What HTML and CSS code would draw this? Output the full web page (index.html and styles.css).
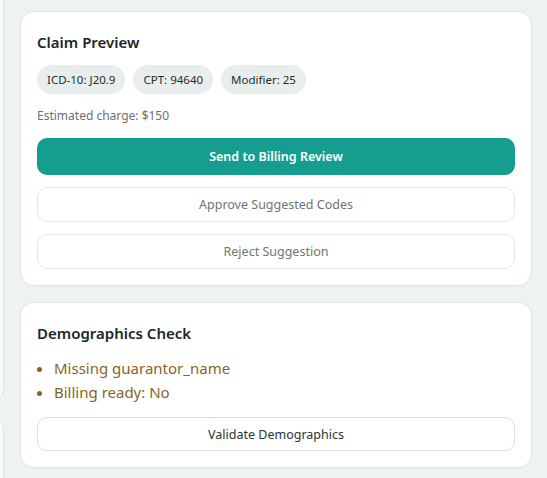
FILE: index.html
```html
<!DOCTYPE html>
<html lang="en">
<head>
<meta charset="utf-8">
<title>Claim Preview</title>
<link rel="stylesheet" href="styles.css">
</head>
<body>
<div class="layout">
  <div class="side">
    <div class="side-card side-card-top"></div>
    <div class="side-card side-card-bottom"></div>
  </div>
  <main class="main">
    <section class="card">
      <h2 class="card-title">Claim Preview</h2>
      <div class="chips">
        <span class="chip">ICD-10: J20.9</span>
        <span class="chip">CPT: 94640</span>
        <span class="chip">Modifier: 25</span>
      </div>
      <p class="muted">Estimated charge: $150</p>
      <div class="actions">
        <button class="btn btn-primary">Send to Billing Review</button>
        <button class="btn btn-outline">Approve Suggested Codes</button>
        <button class="btn btn-outline">Reject Suggestion</button>
      </div>
    </section>
    <section class="card">
      <h2 class="card-title">Demographics Check</h2>
      <ul class="issues">
        <li>Missing guarantor_name</li>
        <li>Billing ready: No</li>
      </ul>
      <button class="btn btn-outline btn-dark">Validate Demographics</button>
    </section>
  </main>
</div>
</body>
</html>
```

FILE: styles.css
```css
* { box-sizing: border-box; }
html, body { margin: 0; padding: 0; }
body {
  background: #eef2f1;
  font-family: "Noto Sans", "Open Sans", sans-serif;
  color: #1f2929;
  height: 478px;
  overflow: hidden;
}
.layout {
  display: flex;
  gap: 16px;
  padding: 11px 15px 0 0;
}
.side {
  width: 4px;
  flex: none;
  overflow: hidden;
  display: flex;
  flex-direction: column;
  align-items: flex-end;
  gap: 11px;
  margin-top: -40px;
}
.side-card {
  width: 200px;
  flex: none;
  background: #f8fafa;
  border: 1px solid #dde4e2;
  border-radius: 14px;
}
.side-card-top { height: 432px; }
.side-card-bottom { height: 200px; }
.main {
  flex: 1;
  display: flex;
  flex-direction: column;
  gap: 16px;
}
.card {
  background: #ffffff;
  border: 1px solid #dfe6e4;
  border-radius: 14px;
  padding: 20px 16px 16px;
  box-shadow: 0 1px 2px rgba(20, 60, 50, 0.03);
}
.card-title {
  margin: 0;
  font-size: 15px;
  line-height: 20px;
  font-weight: 600;
  color: #1d2626;
}
.chips {
  display: flex;
  gap: 8px;
  margin-top: 13px;
}
.chip {
  background: #e8eeed;
  color: #262d2d;
  font-size: 11.5px;
  line-height: 29px;
  height: 29px;
  padding: 0 10px;
  border-radius: 15px;
}
.muted {
  margin: 13px 0 0;
  font-size: 12px;
  line-height: 18px;
  color: #6b6f6f;
}
.actions {
  display: flex;
  flex-direction: column;
  gap: 12px;
  margin-top: 13px;
}
.btn {
  display: block;
  width: 100%;
  font-family: inherit;
  font-size: 12.5px;
  border-radius: 10px;
  cursor: pointer;
}
.btn-primary {
  height: 37px;
  background: #159e8f;
  color: #ffffff;
  border: none;
  font-weight: 600;
}
.btn-outline {
  height: 35px;
  background: #ffffff;
  border: 1px solid #e4e8e7;
  color: #707474;
}
.btn-dark {
  height: 34px;
  color: #2e3434;
  border-color: #dadfde;
  margin-top: 13px;
}
.issues {
  margin: 13px 0 0;
  padding-left: 17px;
  color: #85661f;
  font-size: 15px;
  line-height: 24px;
}
```
